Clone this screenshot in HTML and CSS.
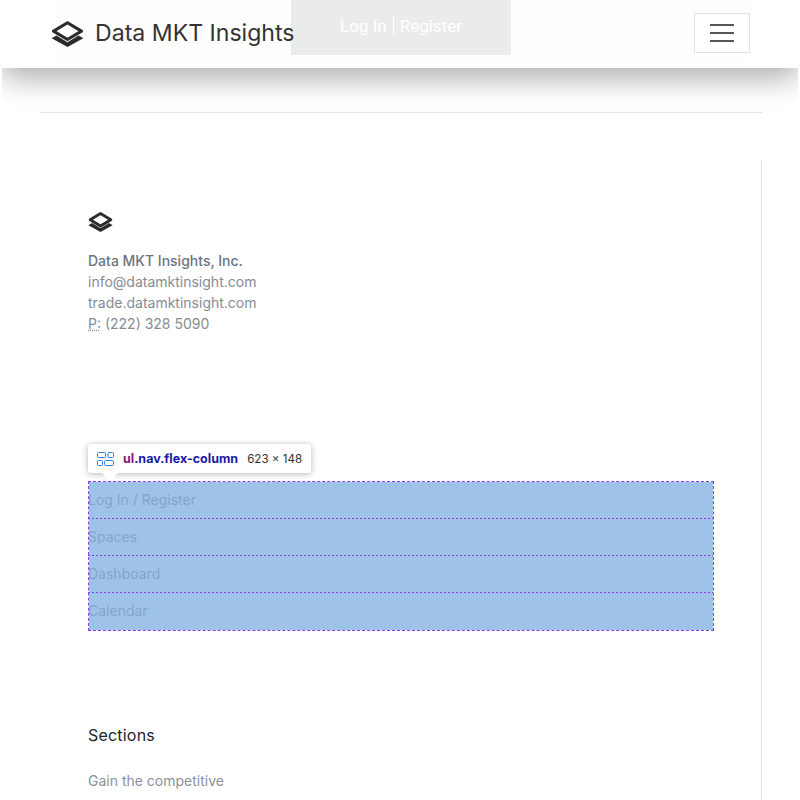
FILE: index.html
```html
<!DOCTYPE html>
<html lang="en">
<head>
    <meta charset="UTF-8">
    <title>Data MKT Insights</title>
    <link rel="stylesheet" href="styles.css">
</head>
<body>
    <header class="topbar">
        <div class="topbar-inner">
            <a class="brand" href="#">
                <svg class="brand-icon" viewBox="0 0 34 27">
                    <path d="M17 1.800 31.500 10.500 17 19.200 2.500 10.500Z" fill="none" stroke="#2b2b2b" stroke-width="3.200" stroke-linejoin="round"/>
                    <path d="M5.500 15 17 22 28.500 15 33.500 18 17 27 .5 18Z" fill="#2b2b2b"/>
                </svg>
                <span>Data MKT Insights</span>
            </a>
            <div class="login-box">Log In <i></i> Register</div>
            <button class="toggler"><b></b><b></b><b></b></button>
        </div>
    </header>

    <div class="page">
        <hr class="rule">
        <div class="content">
            <svg class="small-icon" viewBox="0 0 34 27">
                <path d="M17 2 31 10.500 17 19 3 10.500Z" fill="none" stroke="#2b2b2b" stroke-width="3.800" stroke-linejoin="round"/>
                <path d="M5.500 15 17 22 28.500 15 33.500 18 17 27 .5 18Z" fill="#2b2b2b"/>
            </svg>
            <address class="contact">
                <strong>Data MKT Insights, Inc.</strong>
                <span>info@datamktinsight.com</span>
                <span>trade.datamktinsight.com</span>
                <span><abbr>P:</abbr> (222) 328 5090</span>
            </address>

            <div class="nav-wrap">
                <div class="inspect-tip">
                    <svg class="tip-icon" viewBox="0 0 17 14">
                        <path d="M.5 1.500a1 1 0 0 1 1-1h6a1 1 0 0 1 1 1v3a1 1 0 0 1-1 1h-6a1 1 0 0 1-1-1ZM11 1.500a1 1 0 0 1 1-1h3.500a1 1 0 0 1 1 1v3a1 1 0 0 1-1 1H12a1 1 0 0 1-1-1ZM.5 9.500a1 1 0 0 1 1-1h3a1 1 0 0 1 1 1v3a1 1 0 0 1-1 1h-3a1 1 0 0 1-1-1ZM7.500 9.500a1 1 0 0 1 1-1h7a1 1 0 0 1 1 1v3a1 1 0 0 1-1 1h-7a1 1 0 0 1-1-1Z" fill="none" stroke="#2f80ed" stroke-width="1"/>
                    </svg>
                    <span class="tip-name"><em>ul</em>.nav.flex-column</span>
                    <span class="tip-size">623 × 148</span>
                </div>
                <ul class="nav">
                    <li>Log In / Register</li>
                    <li>Spaces</li>
                    <li>Dashboard</li>
                    <li>Calendar</li>
                </ul>
            </div>

            <h3 class="section-title">Sections</h3>
            <p class="section-text">Gain the competitive</p>
        </div>
    </div>
</body>
</html>
```

FILE: styles.css
```css
html, body {
    margin: 0;
    height: 800px;
    overflow: hidden;
    background: #fff;
    font-family: "Inter", "Liberation Sans", sans-serif;
}

/* top bar */
.topbar {
    margin: 0 2px;
    height: 68px;
    background: #fff;
    box-shadow: 0 10px 30px rgba(0, 0, 0, .33);
    clip-path: inset(0 0 -60px 0);
    position: relative;
}
.topbar-inner {
    position: relative;
    margin-left: 50px;
    width: 698px;
    height: 63px;
    background: #fefefe;
    display: flex;
    align-items: center;
    justify-content: space-between;
}
.brand {
    display: flex;
    align-items: center;
    gap: 10px;
    margin-top: 3px;
    color: #333;
    text-decoration: none;
    font-size: 23.100px;
    position: relative;
    z-index: 1;
}
.brand-icon {
    width: 33px;
    height: 26px;
    margin: 2px 0 0 -1px;
}
.brand span {
    margin-left: 1px;
}
.login-box {
    position: absolute;
    left: 239px;
    top: 0;
    width: 220px;
    height: 55px;
    box-sizing: border-box;
    padding-bottom: 3px;
    background: #eaecec;
    color: #fff;
    font: 17px "Roboto", sans-serif;
    display: flex;
    align-items: center;
    justify-content: center;
}
.login-box i {
    width: 1px;
    height: 18px;
    margin: 0 6px;
    background: #fff;
}
.toggler {
    width: 56px;
    height: 40px;
    margin-top: 3px;
    padding: 0;
    background: #fff;
    border: 1px solid #e2e2e2;
    display: flex;
    flex-direction: column;
    align-items: center;
    justify-content: center;
    gap: 6px;
}
.toggler b {
    display: block;
    width: 24px;
    height: 2px;
    background: #555;
}

/* page body */
.page {
    padding: 44px 38px 0 40px;
}
.rule {
    margin: 0;
    border: 0;
    border-top: 1px solid #e1e5ea;
}
.content {
    box-sizing: border-box;
    margin-top: 48px;
    padding: 51px 47px 0 48px;
    border-right: 1px solid #e1e1e1;
    height: 639px;
    overflow: hidden;
}
.small-icon {
    display: block;
    width: 25px;
    height: 20px;
}
.contact {
    margin-top: 18px;
    font-style: normal;
    font-size: 14px;
    line-height: 21px;
    color: #858c96;
    display: flex;
    flex-direction: column;
}
.contact strong {
    font-weight: 500;
    color: #6c747f;
}
.contact abbr {
    text-decoration: underline dotted;
}

/* highlighted nav list */
.nav-wrap {
    position: relative;
    margin-top: 147px;
}
.nav {
    list-style: none;
    margin: 0;
    padding: 0;
    background: #9fc3e8;
    background-clip: padding-box;
    border: 1px dashed #8a3ee0;
    color: #84a3c8;
    font-size: 14px;
}
.nav li {
    height: 37px;
    line-height: 36px;
    margin-left: -1px;
    background: linear-gradient(90deg, #8a3ee0 50%, transparent 50%) left bottom / 4px 1px repeat-x;
}
.nav li:last-child {
    background: none;
}
.inspect-tip {
    position: absolute;
    left: 0;
    top: -37px;
    height: 29px;
    width: 223px;
    box-sizing: border-box;
    padding-left: 9px;
    background: #fff;
    border-radius: 3px;
    box-shadow: 0 1px 6px rgba(0, 0, 0, .3);
    display: flex;
    align-items: center;
    font-size: 12.500px;
}
.inspect-tip::after {
    content: "";
    position: absolute;
    left: 14px;
    top: 100%;
    border: 8px solid transparent;
    border-top-color: #fff;
    border-bottom: 0;
}
.tip-icon {
    width: 17px;
    height: 14px;
    margin-right: 9px;
}
.tip-name {
    font-weight: 700;
    color: #1a1aa6;
    margin-right: 9px;
}
.tip-name em {
    font-style: normal;
    color: #881280;
}
.tip-size {
    color: #333;
    font-size: 11.600px;
}

/* sections */
.section-title {
    margin: 94px 0 0;
    font-size: 16px;
    line-height: 20px;
    font-weight: 400;
    letter-spacing: .2px;
    color: #212529;
}
.section-text {
    margin: 26px 0 0;
    font-size: 14px;
    line-height: 20px;
    color: #8a919b;
}
```
